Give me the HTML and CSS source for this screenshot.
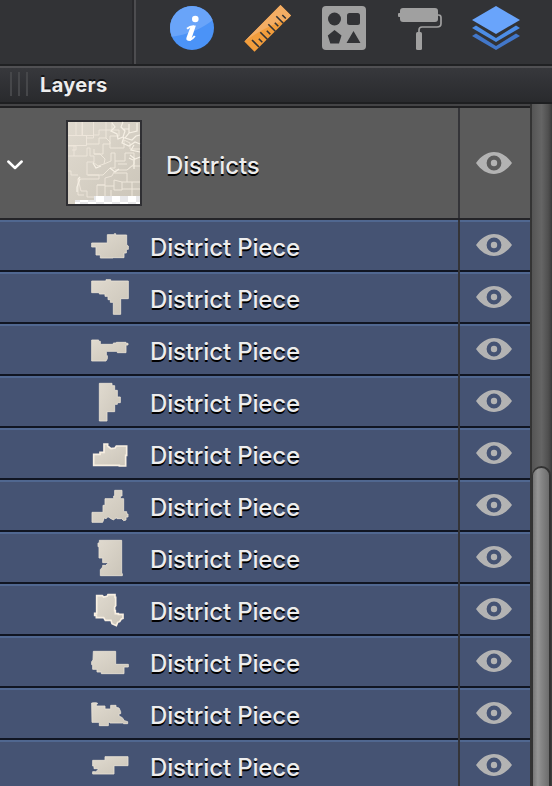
FILE: index.html
```
<!DOCTYPE html>
<html lang="en">
<head>
<meta charset="utf-8">
<title>Layers</title>
<link rel="stylesheet" href="styles.css">
</head>
<body>
<svg class="defs" width="0" height="0">
  <defs>
    <linearGradient id="stone" x1="0" y1="0" x2="1" y2="1"><stop offset="0" stop-color="#e0dacf"/><stop offset="1" stop-color="#cbc5b9"/></linearGradient>
    <clipPath id="disc"><circle cx="22" cy="22" r="22"/></clipPath>
    <pattern id="checks" width="16" height="12" patternUnits="userSpaceOnUse" x="6" y="76"><path fill="#e8e8ea" d="M0 0h16v12H0z"/><path fill="#fff" d="M8 0h8v6H8zM0 6h8v6H0z"/></pattern>
    <symbol id="eye" viewBox="0 0 36 22"><path fill="#b3b3b3" fill-rule="evenodd" d="M0 11C5 4 11 0 18 0s13 4 18 11c-5 7-11 11-18 11S5 18 0 11zM18 3.6a7.4 7.4 0 1 0 0 14.8 7.4 7.4 0 0 0 0-14.8z"/><circle cx="18" cy="11" r="3.2" fill="#b3b3b3"/></symbol>
  </defs>
</svg>
<div class="app">
  <header class="toolbar">
    <div class="spacer"></div>
    <nav class="tools">
      <svg width="44" height="44" viewBox="0 0 44 44"><g clip-path="url(#disc)"><path fill="#4b93f7" d="M0 0h44v44H0z"/><path fill="#69a4f9" d="M0 0h44v13Q26 28 0 31z"/></g><circle cx="25.3" cy="13" r="3.3" fill="#fff"/><path d="M17 22.8q3-2.500 6.200-2.500L19 31.500q-.8 2.600 1.200 2.200 2.200-.5 4.600-3.700" fill="none" stroke="#fff" stroke-width="2"/><path fill="#fff" d="M20.600 20.800l5.300-1.400-4.200 12.600q-.5 2 .8 1.300-2.500 2.300-5 1.200-1.900-.9-.7-3.800z"/></svg>
      <svg class="ruler" width="48" height="48" viewBox="0 0 48 48"><path fill="#f29d3c" d="M.3 37.500 36.500 1 47 11.500 10.500 47.700z"/><path fill="#f3ad64" d="M.3 37.500 36.500 1 47 11.500l-4 4Q22 22 .3 37.500z"/><path d="M8 36l7 7M14.800 34.800l3.500 3.500M16.300 28.300l7 7M22.800 26.800l3.500 3.500M24.300 20.300l7 7M30.800 18.800l3.500 3.500M32.300 12.300l7 7M38.300 11l3.500 3.500" stroke="#323336" stroke-width="1.600"/></svg>
      <svg width="44" height="44" viewBox="0 0 44 44"><rect width="44" height="44" rx="4" fill="#a0a0a0"/><g fill="#323336"><circle cx="12.500" cy="13" r="6.500"/><rect x="25" y="7" width="13" height="12" rx="2.500"/><path d="M12.500 24l7 5.500-2.500 8H8.300l-2.500-8zM31.500 25 38.500 37h-14z"/></g></svg>
      <svg class="roller" width="44" height="44" viewBox="0 0 44 44"><g fill="#a0a0a0"><rect x="2" y="2" width="38" height="14" rx="3"/><rect y="7" width="5" height="4" rx="1"/><rect x="18" y="26" width="6" height="18" rx="1.500"/></g><path d="M39 9h1.500q2.500 0 2.500 2.500v6q0 3.500-4 3.500H24q-3 0-3 3v3" fill="none" stroke="#a0a0a0" stroke-width="1.700"/></svg>
      <svg width="48" height="44" viewBox="0 0 48 44"><path fill="#4277c9" d="M0 30l4-2.500L24 40l20-12.500 4 2.500-24 14z"/><path fill="#4c8de6" d="M0 22l4-2.500L24 32l20-12.500 4 2.500-24 14z"/><path fill="#69a4fb" d="M24 0l24 14-24 14L0 14z"/></svg>
    </nav>
  </header>
  <div class="titlebar"><span class="grip"></span><h1>Layers</h1></div>
  <main class="panel">
    <div class="list">
      <div class="group">
        <div class="info">
          <svg class="chevron" width="18" height="12" viewBox="0 0 18 12"><path d="M2.300 2.500 9 9l6.700-6.500" fill="none" stroke="#fff" stroke-width="2.500" stroke-linecap="round" stroke-linejoin="round"/></svg>
          <svg class="thumb" width="76" height="86" viewBox="0 0 76 86"><path fill="#2f2f33" d="M0 0h76v86H0z"/><path fill="url(#stone)" d="M2 2h72v82H2z"/>
            <g fill="none" stroke="#eee7db"><path stroke-width=".9" d="M10 2v13M16 2v13M2 15.500h18.500v10H2M16.500 2v13.500h11V2M20.500 18h7v-3M40 2v8h-7v5h-5M2 26h8v4H6M8 26v10H2M8 36h13v-8h3v8h4v6h-7v13h12v4H12v16h6M2 51h3v4h7M12 59l3 12h6v6h10V65h8v-7l7-2 2-4"/>
            <path stroke-width="1" d="M20 24h13v-6h7v-8h6V2M46 10h7v6h-9v8h-7v10h-9v-5M40 18l4 4v6h14v-8l6 3v6h10M28 34h6l5 5-1 5-6 2-5-4M38 44l7-3v-8h4v15h-5l-7 7H22M49 41h10v-8h9v11l-7 6H49M31 65h8v12M39 66h9v-6l8 2v8h-8v-4M56 62h18M56 69h18M48 53h13v9M52 44h9M61 50l5-4h8M66 62v14M45 70v7"/>
            <path stroke-width="1.200" stroke="#f6f0e5" d="M46 3l3 4-4 4 6 3 1 5 5-2 2-6-4-4 2-5M57 9h6v-5M63 4v9l-4 5 7 2 4-4 4-1M63 13l8-2V3M58 17l-2 6 7 3 6-4 5 2M68 25l-3 5 9 2M27 43l3 5 5-2M44 48l5 4 4-3M64 35l5 4 5-2M68 39v10M63 38l4 2M14 59l-3 8v5M12 59l2-2"/></g>
            <path fill="url(#checks)" d="M9 80h19v-4h46v8H9z"/></svg>
          <span class="name">Districts</span>
        </div>
        <div class="vis"><svg width="36" height="22"><use href="#eye"/></svg></div>
      </div>
      <div class="row"><div class="info"><svg class="piece" viewBox="0 0 180 156"><path d="M35 69h47v-25h21v-3h4v4h33v29l5 4v10h-6v11h-7v14h-33v1H61v-9H48V81H35z"/></svg><span class="name">District Piece</span></div><div class="vis"><svg width="36" height="22"><use href="#eye"/></svg></div></div>
      <div class="row"><div class="info"><svg class="piece" viewBox="0 156 180 156"><path d="M35 183h43v-4h14v4h53v53h-23v47h-22v-36h-9v-8h-7v-10H75v-7H58v-4H35z"/></svg><span class="name">District Piece</span></div><div class="vis"><svg width="36" height="22"><use href="#eye"/></svg></div></div>
      <div class="row"><div class="info"><svg class="piece" viewBox="0 312 180 156"><path d="M35 360h21v4h5v9h39v-4h9v-2h29v3h6v5h-6v23h-26v-4h-33v13h3v9l-4 7H35z"/></svg><span class="name">District Piece</span></div><div class="vis"><svg width="36" height="22"><use href="#eye"/></svg></div></div>
      <div class="row"><div class="info"><svg class="piece" viewBox="0 18 180 156"><path d="M58 40h38v7h8v14h8v20h9v17h-9v5h-8v22H81v28H58z"/></svg><span class="name">District Piece</span></div><div class="vis"><svg width="36" height="22"><use href="#eye"/></svg></div></div>
      <div class="row"><div class="info"><svg class="piece rim" viewBox="0 174 180 156"><path d="M41 253h19v-6h12v-25h11v6l10 8 12-2 4-6h31v28h-3v32h-19v-2H41z"/></svg><span class="name">District Piece</span></div><div class="vis"><svg width="36" height="22"><use href="#eye"/></svg></div></div>
      <div class="row"><div class="info"><svg class="piece" viewBox="0 330 180 156"><path d="M36 427h33v-21h6v-20h26v-8h3v-17h22v17h-5v8h10v39h9v7h4v9h-6v9l-7 2-6-6h-14v-3l-7 3-3 4-8-4-9-6-7 7-4-4-5 14H36z"/></svg><span class="name">District Piece</span></div><div class="vis"><svg width="36" height="22"><use href="#eye"/></svg></div></div>
      <div class="row"><div class="info"><svg class="piece" viewBox="0 6 180 156"><path d="M58 31h67v100h2v6H61v-18l7-8v-5h9l9-8H68V84H57V50h-3V39h4z"/></svg><span class="name">District Piece</span></div><div class="vis"><svg width="36" height="22"><use href="#eye"/></svg></div></div>
      <div class="row"><div class="info"><svg class="piece rim" viewBox="0 162 180 156"><path d="M50 197h17l4 4 10-2 3-5h21v8h2v25l-3 4v11h2v9h9v2h14v12l-5 2-5 8-6 2-4 10-13-6-3-10H76l-5-8H49v-7h-5v-6h6z"/></svg><span class="name">District Piece</span></div><div class="vis"><svg width="36" height="22"><use href="#eye"/></svg></div></div>
      <div class="row"><div class="info"><svg class="piece" viewBox="0 318 180 156"><path d="M40 364h67v39h38v8h-13v20H64v-5H51v-8H38v-14h-3v-9l4-5z"/></svg><span class="name">District Piece</span></div><div class="vis"><svg width="36" height="22"><use href="#eye"/></svg></div></div>
      <div class="row"><div class="info"><svg class="piece" viewBox="0 24 180 156"><path d="M35 69l9-1 8 1v3h-3v6h26v9h17V76h16v6l9 2 5 11v6h-5v7l10 5 6 9 10 3v6h-12l-3-2H90v-2h-5v10H58v-10H36z"/></svg><span class="name">District Piece</span></div><div class="vis"><svg width="36" height="22"><use href="#eye"/></svg></div></div>
      <div class="row"><div class="info"><svg class="piece" viewBox="0 180 180 156"><path d="M38 241h37v-11h69v27h-42v25H38v-7h9l7-5v-4H42v-8h-4z"/></svg><span class="name">District Piece</span></div><div class="vis"><svg width="36" height="22"><use href="#eye"/></svg></div></div>
    </div>
    <div class="track"><div class="thumbbar"></div></div>
  </main>
</div>
</body>
</html>
```
FILE: styles.css
```
* { box-sizing: border-box; }
body { margin: 0; background: #323336; font-family: Inter, "Liberation Sans", sans-serif; color: #ededed; }
.defs { display: block; height: 0; }
.app { width: 552px; height: 786px; overflow: hidden; display: flex; flex-direction: column; }
.toolbar { height: 64px; flex: none; display: flex; background: #323336; }
.spacer { width: 136px; border-right: 2px solid #4d4d50; box-shadow: inset -2px 0 #29292c; }
.tools { flex: 1; display: flex; gap: 30px; align-items: flex-start; padding: 6px 0 0 34px; }
.tools svg { display: block; flex: none; }
.tools .ruler { margin-top: -2px; }
.tools .roller { margin-left: 2px; }
.titlebar { height: 42px; flex: none; display: flex; align-items: center; padding: 0 0 3px 10px; border-top: 2px solid #202123; border-bottom: 2px solid #444446; background: linear-gradient(#505053 2px, #37383c 2px, #292a2d 36px, #1e1f21 36px); }
.grip { width: 18px; height: 24px; background: repeating-linear-gradient(90deg, #46474a 0 2px, transparent 2px 8px); }
h1 { margin: 2px 0 0 12px; font-size: 20px; line-height: 28px; font-weight: 700; letter-spacing: 0.35px; text-shadow: 0 -2px #141416; }
.panel { flex: 1; min-height: 0; display: flex; }
.list { width: 530px; overflow: hidden; }
.group, .row { display: flex; }
.group { height: 114px; background: #5b5b5b; border-top: 2px solid #202022; border-bottom: 2px solid #242428; }
.row { height: 52px; background: #455373; border-top: 2px solid #506790; border-bottom: 2px solid #101522; }
.info { width: 458px; display: flex; align-items: center; }
.vis { width: 72px; padding-right: 2px; border-left: 2px solid #343438; display: flex; align-items: center; justify-content: center; }
.row .vis { margin: -2px 0; }
.vis svg { display: block; }
.row .vis svg { margin-top: -2px; }
.chevron { margin: 3px 0 0 6px; }
.thumb { margin-left: 42px; }
.group .info .name { margin-left: 24px; margin-top: 5px; }
.name { font-size: 24px; line-height: 30px; font-weight: 500; letter-spacing: -0.15px; text-shadow: 0 2px #000; white-space: nowrap; }
.piece { width: 60px; height: 52px; margin: -2px 10px -2px 80px; fill: url(#stone); stroke: #e9e2d5; stroke-width: 2.500px; }
.rim { stroke: #f8efe2; stroke-width: 5px; }
.row .name { margin-top: 4px; }
.track { width: 22px; margin-top: -2px; border-left: 2px solid #343434; border-right: 1px solid #3b3d3c; background: linear-gradient(90deg, #555, #656565 50%, #505050 85%, #404040); }
.thumbbar { margin-top: 362px; height: 340px; border: 2px solid #333; border-left-width: 1px; border-radius: 10px 10px 0 0; background: linear-gradient(90deg, #777, #959595 30%, #858585 55%, #6d6d6d); }
```
